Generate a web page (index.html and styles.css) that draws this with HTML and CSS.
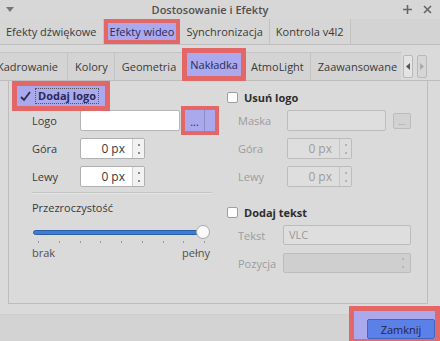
FILE: index.html
```html
<!DOCTYPE html>
<html lang="pl">
<head>
  <meta charset="UTF-8">
  <meta name="viewport" content="width=device-width, initial-scale=1.0">
  <title>Dostosowanie i Efekty</title>
  <link rel="stylesheet" href="styles.css">
</head>
<body>

  <div class="titlebar">
    <span class="menu-btn">
      <svg width="8" height="5" viewBox="0 0 8 5"><path d="M0 0h8L4 5z" fill="#777"/></svg>
    </span>
    <span class="title">Dostosowanie i Efekty</span>
    <span class="win-btns">
      <svg width="9" height="9" viewBox="0 0 9 9"><path d="M4.5 0v9M0 4.5h9" stroke="#666" stroke-width="1.6"/></svg>
      <svg width="9" height="9" viewBox="0 0 9 9"><path d="M1 1l7 7M8 1L1 8" stroke="#666" stroke-width="1.6"/></svg>
    </span>
  </div>

  <div class="tabs">
    <div class="tab">Efekty dźwiękowe</div>
    <div class="tab active">Efekty wideo</div>
    <div class="tab">Synchronizacja</div>
    <div class="tab">Kontrola v4l2</div>
  </div>

  <div class="page">
    <div class="subtabs">
      <div class="subtab-clip">
        <div class="subtab-strip">
          <div class="subtab first">Kadrowanie</div>
          <div class="subtab">Kolory</div>
          <div class="subtab">Geometria</div>
          <div class="subtab active">Nakładka</div>
          <div class="subtab">AtmoLight</div>
          <div class="subtab">Zaawansowane</div>
        </div>
      </div>
      <div class="scroll-btn">
        <svg width="4" height="7" viewBox="0 0 4 7"><path d="M4 0v7L0 3.5z" fill="#555"/></svg>
      </div>
      <div class="scroll-btn off">
        <svg width="4" height="7" viewBox="0 0 4 7"><path d="M0 0v7l4-3.5z" fill="#aaa"/></svg>
      </div>
    </div>

    <div class="frame">
      <div class="col col-left">
        <div class="check-row marked">
          <svg class="tick" width="11" height="11" viewBox="0 0 11 11"><path d="M1 6l3 3 6-8" fill="none" stroke="#2b2b44" stroke-width="1.8"/></svg>
          <span class="focus">Dodaj logo</span>
        </div>

        <div class="row row-logo">
          <span class="label">Logo</span>
          <div class="input file-input"></div>
          <div class="dots-mark"><span class="dots">...</span><span class="dots-split"></span></div>
        </div>

        <div class="row row-spin">
          <span class="label">Góra</span>
          <div class="spin">
            <span class="spin-val">0 px</span>
            <span class="spin-btns"><i class="up"></i><i class="down"></i></span>
          </div>
        </div>

        <div class="row row-spin">
          <span class="label">Lewy</span>
          <div class="spin">
            <span class="spin-val">0 px</span>
            <span class="spin-btns"><i class="up"></i><i class="down"></i></span>
          </div>
        </div>

        <div class="separator"></div>

        <div class="opacity-label">Przezroczystość</div>
        <div class="slider">
          <div class="groove"></div>
          <div class="handle"></div>
        </div>
        <div class="ticks">
          <i></i><i></i><i></i><i></i><i></i><i></i><i></i><i></i><i></i>
        </div>
        <div class="slider-labels"><span>brak</span><span>pełny</span></div>
      </div>

      <div class="col col-right">
        <div class="check-row plain">
          <span class="box"></span>
          <span>Usuń logo</span>
        </div>

        <div class="row row-mask disabled">
          <span class="label">Maska</span>
          <div class="input mask-input"></div>
          <div class="small-btn">...</div>
        </div>

        <div class="row row-spin disabled">
          <span class="label">Góra</span>
          <div class="spin">
            <span class="spin-val">0 px</span>
            <span class="spin-btns"><i class="up"></i><i class="down"></i></span>
          </div>
        </div>

        <div class="row row-spin disabled">
          <span class="label">Lewy</span>
          <div class="spin">
            <span class="spin-val">0 px</span>
            <span class="spin-btns"><i class="up"></i><i class="down"></i></span>
          </div>
        </div>

        <div class="check-row plain text-check">
          <span class="box"></span>
          <span>Dodaj tekst</span>
        </div>

        <div class="row row-text disabled">
          <span class="label">Tekst</span>
          <div class="input text-input">VLC</div>
        </div>

        <div class="row row-pos disabled">
          <span class="label">Pozycja</span>
          <div class="combo">
            <span class="spin-btns"><i class="up"></i><i class="down"></i></span>
          </div>
        </div>
      </div>
    </div>
  </div>

  <div class="footer">
    <div class="close-mark">
      <button class="close-btn">Zamknij</button>
    </div>
  </div>

</body>
</html>
```

FILE: styles.css
```css
body {
  font-family: "Open Sans", "Noto Sans", sans-serif;
  font-size: 11px;
  background-color: #dadada;
  color: #3a3a3a;
  margin: 0;
  padding: 0;
  width: 440px;
  height: 341px;
  overflow: hidden;
}
.titlebar {
  height: 19px;
  display: flex;
  align-items: center;
  background-color: #d7d7d7;
}
.menu-btn {
  width: 20px;
  padding-left: 6px;
  box-sizing: border-box;
  display: flex;
  align-items: center;
}
.title {
  flex: 1;
  text-align: center;
  font-weight: 600;
  color: #505050;
}
.win-btns {
  width: 40px;
  display: flex;
  gap: 11px;
  padding-left: 3px;
  box-sizing: border-box;
}
.tabs {
  height: 25px;
  display: flex;
  border-bottom: 1px solid #bdbdbd;
  background-color: #d3d3d3;
}
.tab {
  padding: 0 6px;
  line-height: 25px;
  border-right: 1px solid #c2c2c2;
  background-color: #d6d6d6;
  white-space: nowrap;
}
.tab.active {
  border: 4px solid #e36767;
  padding: 0 2px;
  line-height: 17px;
  background-color: #aaa9ee;
  color: #2a2a55;
}
.page {
  padding-top: 7px;
}
.subtabs {
  display: flex;
  align-items: flex-start;
  border-bottom: 1px solid #bdbdbd;
  box-sizing: border-box;
  height: 29px;
}
.subtab-clip {
  width: 401px;
  height: 28px;
  clip-path: inset(-10px 0 -10px 0);
}
.subtab-strip {
  display: flex;
  margin-left: -10px;
  height: 28px;
}
.subtab {
  padding: 0 6px 0 7px;
  line-height: 27px;
  border-top: 1px solid #c4c4c4;
  border-right: 1px solid #c4c4c4;
  background-color: #d4d4d4;
  white-space: nowrap;
}
.subtab.first {
  padding: 0 9px 0 7px;
}
.subtab.active {
  padding: 0 3px;
  margin: 1px 3px 4px 4px;
  line-height: 23px;
  border: none;
  background-color: #aaa9ee;
  color: #2a2a55;
  box-shadow: 0 0 0 5px #e36767;
  position: relative;
  z-index: 1;
}
.scroll-btn {
  width: 10px;
  height: 23px;
  margin-top: 3px;
  margin-left: 2px;
  border: 1px solid #b9b9b9;
  border-radius: 2px;
  background-color: #e4e4e4;
  box-sizing: border-box;
  display: flex;
  align-items: center;
  justify-content: center;
}
.scroll-btn.off {
  margin-left: 4px;
  background-color: #d6d6d6;
}
.frame {
  margin-left: 8px;
  width: 420px;
  height: 223px;
  border-left: 1px solid #bdbdbd;
  border-right: 1px solid #bdbdbd;
  border-bottom: 1px solid #bdbdbd;
  box-sizing: border-box;
  display: flex;
}
.col-left {
  width: 211px;
}
.col-right {
  flex: 1;
}
.check-row {
  display: flex;
  align-items: center;
  font-weight: 700;
  color: #2e2e2e;
}
.check-row.marked {
  margin: 5px 0 0 8px;
  width: 88px;
  height: 20px;
  background-color: #aaa9ee;
  box-shadow: 0 0 0 5px #e36767;
  color: #2a2a55;
  position: relative;
}
.tick {
  margin-left: 3px;
}
.focus {
  margin-left: 4px;
  padding: 0 2px;
  border: 1px dotted #555;
  line-height: 14px;
}
.check-row.plain {
  margin: 8px 0 0 7px;
  height: 16px;
}
.check-row.text-check {
  margin-top: 17px;
}
.box {
  width: 11px;
  height: 11px;
  margin-right: 6px;
  border: 1px solid #9e9e9e;
  border-radius: 2px;
  background-color: #fdfdfd;
  box-sizing: border-box;
}
.row {
  display: flex;
  align-items: center;
  padding-left: 23px;
}
.row .label {
  width: 48px;
}
.input {
  height: 21px;
  border: 1px solid #b5b5b5;
  border-radius: 2px;
  background-color: #ffffff;
  box-sizing: border-box;
}
.row-logo {
  margin-top: 4px;
  height: 21px;
}
.file-input {
  width: 100px;
}
.dots-mark {
  margin-left: 5px;
  width: 30px;
  height: 21px;
  background-color: #aaa9ee;
  box-shadow: 0 0 0 4px #e36767;
  display: flex;
  position: relative;
}
.dots {
  width: 19px;
  text-align: center;
  line-height: 24px;
  color: #333;
}
.dots-split {
  border-left: 1px solid #8d8cc8;
}
.row-spin {
  margin-top: 7px;
  height: 21px;
}
.spin {
  width: 65px;
  height: 21px;
  display: flex;
  border: 1px solid #b0b0b0;
  border-radius: 2px;
  background-color: #ffffff;
  box-sizing: border-box;
}
.spin-val {
  flex: 1;
  text-align: right;
  padding-right: 7px;
  line-height: 19px;
  font-size: 12px;
}
.spin-btns {
  width: 11px;
  border-left: 1px solid #cfcfcf;
  background-color: #f2f2f2;
  display: flex;
  flex-direction: column;
  justify-content: center;
  align-items: center;
  gap: 6px;
}
.spin-btns i {
  width: 2px;
  height: 2px;
  background-color: #8a8a8a;
}
.separator {
  margin: 5px 0 0 23px;
  width: 180px;
  height: 1px;
  background-color: #c4c4c4;
  border-bottom: 1px solid #e6e6e6;
}
.opacity-label {
  margin: 6px 0 0 23px;
  line-height: 16px;
}
.slider {
  margin: 10px 0 0 24px;
  width: 177px;
  height: 12px;
  position: relative;
  display: flex;
  align-items: center;
}
.groove {
  width: 172px;
  height: 5px;
  border: 1px solid #2c5ea8;
  border-radius: 3px;
  background-color: #3c7ed6;
  box-sizing: border-box;
}
.handle {
  position: absolute;
  left: 163px;
  top: -1px;
  width: 14px;
  height: 14px;
  border: 1px solid #a9a9a9;
  border-radius: 50%;
  background-color: #fafafa;
  box-sizing: border-box;
}
.ticks {
  margin: 3px 0 0 29px;
  width: 167px;
  height: 2px;
  display: flex;
  justify-content: space-between;
}
.ticks i {
  width: 1px;
  height: 2px;
  background-color: #9a9a9a;
}
.slider-labels {
  margin: 3px 10px 0 23px;
  display: flex;
  justify-content: space-between;
  line-height: 14px;
  color: #505050;
}
.disabled {
  color: #9c9c9c;
}
.disabled .input,
.disabled .spin {
  background-color: #dedede;
  border-color: #bcbcbc;
}
.disabled .spin-btns {
  background-color: #dcdcdc;
  border-left-color: #c6c6c6;
}
.disabled .spin-btns i {
  background-color: #b4b4b4;
}
.col-right .row {
  padding-left: 18px;
}
.col-right .row .label {
  width: 49px;
}
.row-mask {
  margin-top: 5px;
  height: 21px;
}
.mask-input {
  width: 99px;
}
.small-btn {
  margin-left: 7px;
  width: 18px;
  height: 16px;
  border: 1px solid #bcbcbc;
  border-radius: 2px;
  background-color: #d2d2d2;
  box-sizing: border-box;
  text-align: center;
  line-height: 16px;
  font-size: 9px;
  color: #999;
}
.row-text {
  margin-top: 5px;
  height: 20px;
}
.col-right .row-text .label,
.col-right .row-pos .label {
  width: 45px;
}
.text-input {
  width: 128px;
  height: 20px;
  padding-left: 5px;
  line-height: 18px;
  color: #9a9a9a;
}
.row-pos {
  margin-top: 8px;
  height: 20px;
}
.combo {
  width: 128px;
  height: 20px;
  border: 1px solid #bcbcbc;
  border-radius: 2px;
  background-color: #cfcfcf;
  box-sizing: border-box;
  display: flex;
  justify-content: flex-end;
}
.combo .spin-btns {
  border-left: none;
  background-color: transparent;
  width: 14px;
}
.footer {
  height: 38px;
  display: flex;
  justify-content: flex-end;
  background: linear-gradient(#dadada 0, #dadada 10px, #cfcfcf 10px, #cfcfcf 11px, #d3d3d3 11px);
}
.close-mark {
  margin-top: 2px;
  width: 91px;
  height: 36px;
  border: 5px solid #e36767;
  border-bottom-width: 3px;
  background-color: #aaa9ee;
  box-sizing: border-box;
  padding: 8px 0 0 13px;
}
.close-btn {
  width: 68px;
  height: 20px;
  border: 1px solid #4066c4;
  border-radius: 2px;
  background-color: #5b80e8;
  font-family: "Open Sans", "Noto Sans", sans-serif;
  font-size: 11px;
  color: #25254a;
  padding: 0;
  display: block;
}
```
